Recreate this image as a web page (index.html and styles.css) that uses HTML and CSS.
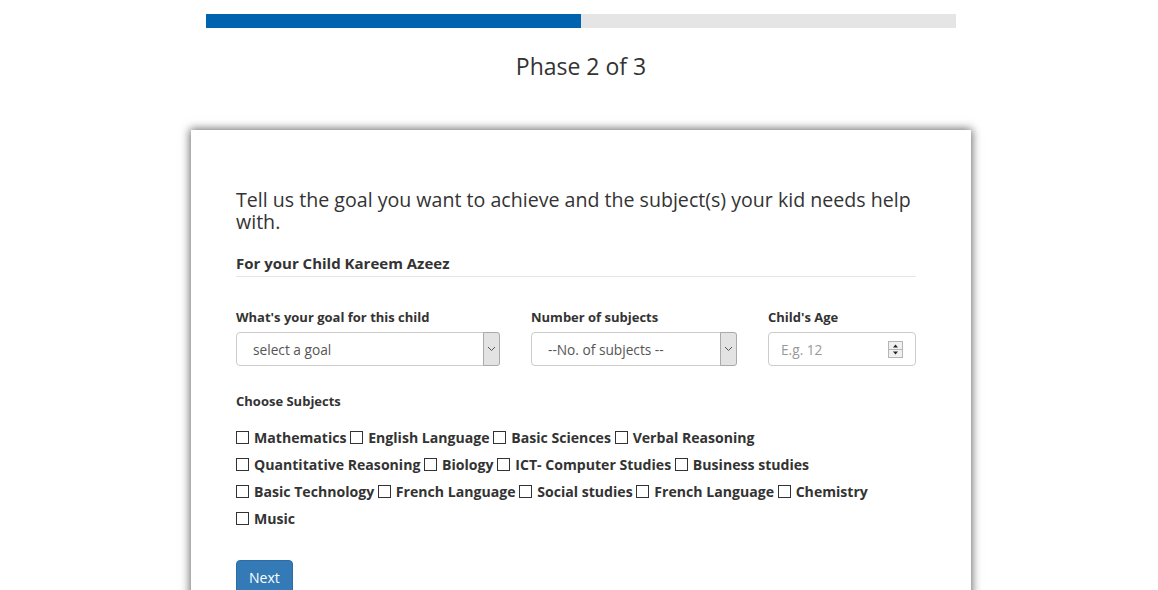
FILE: index.html
```html
<!DOCTYPE html>
<html>
<head>
<meta charset="utf-8">
<link rel="stylesheet" href="styles.css">
</head>
<body>
<div class="page">
  <div class="progress"><div class="progress-fill"></div></div>
  <h2 class="phase">Phase 2 of 3</h2>
  <div class="card">
    <h3 class="title">Tell us the goal you want to achieve and the subject(s) your kid needs help with.</h3>
    <h4 class="child">For your Child Kareem Azeez</h4>
    <div class="fields">
      <div class="field">
        <label class="lbl">What's your goal for this child</label>
        <div class="select"><span class="sel-text">select a goal</span><span class="sel-arrow"><svg width="9" height="6" viewBox="0 0 9 6"><path d="M1 1l3.5 3.5L8 1" fill="none" stroke="#555" stroke-width="1"/></svg></span></div>
      </div>
      <div class="field">
        <label class="lbl">Number of subjects</label>
        <div class="select"><span class="sel-text">--No. of subjects --</span><span class="sel-arrow"><svg width="9" height="6" viewBox="0 0 9 6"><path d="M1 1l3.5 3.5L8 1" fill="none" stroke="#555" stroke-width="1"/></svg></span></div>
      </div>
      <div class="field">
        <label class="lbl">Child's Age</label>
        <div class="number"><span class="placeholder">E.g. 12</span><span class="spin"><svg width="15" height="17" viewBox="0 0 15 17"><rect x="0.5" y="0.5" width="14" height="16" fill="#f0f0f0" stroke="#b5b5b5"/><line x1="1" y1="8.5" x2="14" y2="8.5" stroke="#b5b5b5"/><path d="M5 6.5h5L7.5 3.5z" fill="#222"/><path d="M5 10.5h5L7.5 13.5z" fill="#222"/></svg></span></div>
      </div>
    </div>
    <div class="lbl subj-lbl">Choose Subjects</div>
    <div class="subjects">
      <div class="row"><span class="cb"></span>Mathematics <span class="cb"></span>English Language <span class="cb"></span>Basic Sciences <span class="cb"></span>Verbal Reasoning</div>
      <div class="row"><span class="cb"></span>Quantitative Reasoning <span class="cb"></span>Biology <span class="cb"></span>ICT- Computer Studies <span class="cb"></span>Business studies</div>
      <div class="row"><span class="cb"></span>Basic Technology <span class="cb"></span>French Language <span class="cb"></span>Social studies <span class="cb"></span>French Language <span class="cb"></span>Chemistry</div>
      <div class="row"><span class="cb"></span>Music</div>
    </div>
    <button class="btn">Next</button>
  </div>
</div>
</body>
</html>
```
FILE: styles.css
```css
html, body { margin: 0; padding: 0; background: #fff; }
body {
  font-family: "Open Sans", "Noto Sans", sans-serif;
  color: #333;
  padding-left: 4px;
  overflow: hidden;
}
.page { width: 780px; margin: 0 auto; padding-top: 14px; }
.progress { width: 750px; height: 14px; margin: 0 auto; background: #e5e5e5; }
.progress-fill { width: 50%; height: 100%; background: #0063b0; }
.phase {
  margin: 0; padding-top: 23px; text-align: center;
  font-size: 23px; line-height: 30px; font-weight: normal; color: #333;
}
.card {
  margin-top: 49px;
  background: #fff;
  box-shadow: 0 0 9px 1px rgba(0,0,0,0.6);
  padding: 59px 55px 40px 45px;
  min-height: 500px;
}
.title { margin: 0; font-size: 19.6px; line-height: 22px; font-weight: normal; color: #333; }
.child {
  margin: 20px 0 0; font-size: 15px; line-height: 20px; font-weight: bold;
  padding-bottom: 3px; border-bottom: 1px solid #e6e6e6;
}
.fields { display: grid; grid-template-columns: 264px 206px 148px; column-gap: 31px; margin-top: 30px; }
.field { display: flex; flex-direction: column; }
.lbl { font-size: 13px; font-weight: bold; line-height: 20px; color: #333; }
.field .lbl { margin-bottom: 5px; }
.select {
  height: 34px; box-sizing: border-box; border: 1px solid #ccc; border-radius: 4px;
  display: flex; align-items: stretch; font-size: 13.7px; color: #555; background: #fff;
}
.sel-text { flex: 1; display: flex; align-items: center; padding-left: 16px; }
.sel-arrow {
  width: 15px; background: #e3e3e3; border: 1px solid #aaa; border-radius: 0 3px 3px 0;
  display: flex; align-items: center; justify-content: center; margin: -1px;
}
.number {
  height: 34px; box-sizing: border-box; border: 1px solid #ccc; border-radius: 4px;
  display: flex; align-items: center; font-size: 13.7px; padding: 0 12px 0 12px;
}
.placeholder { flex: 1; color: #999; }
.spin { display: flex; }
.subj-lbl { margin-top: 25px; }
.subjects { margin-top: 13px; font-size: 14.1px; font-weight: bold; }
.row { line-height: 27px; height: 27px; white-space: nowrap; }
.cb {
  display: inline-block; width: 11px; height: 11px; border: 1px solid #333;
  vertical-align: -1px; margin-right: 5px; background: #fff;
}
.btn {
  margin-top: 28px; background: #337ab7; color: #fff; border: 1px solid #2e6da4;
  border-radius: 4px; font-family: inherit; font-size: 14px; padding: 7px 12px 9px; line-height: 20px;
}
```
